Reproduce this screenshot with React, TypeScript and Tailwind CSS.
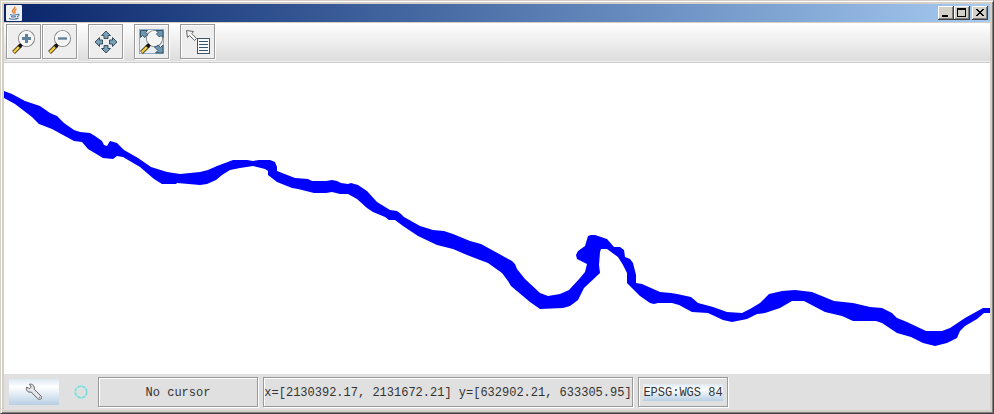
import React, { FunctionComponent, ReactNode } from "react";

const RIVER =
  "M4 91 L12 94 L25 101 L40 106 L50 113 L57 116 L64 123 L74 130 L80 132 L90 133 L95 136 L102 141 L104 145 L107 146 L110 141 L117 143 L124 150 L138 158 L151 167 L167 172 L180 174 L200 172 L208 170 L217 166 L233 160 L247 160 L253 161 L259 160 L270 160 L275 162 L277 167 L277 171 L295 178 L308 179 L312 181 L326 181 L332 180 L337 181 L341 183 L348 184 L351 183 L358 185 L367 191 L377 202 L390 210 L397 211 L401 214 L404 217 L420 226 L433 230 L444 231 L453 234 L470 241 L481 244 L512 261 L515 264 L517 269 L525 279 L540 293 L548 296 L560 294 L569 290 L580 278 L585 272 L587 264 L577 259 L576 255 L578 251 L585 246 L588 236 L591 235 L595 235 L607 239 L614 247 L620 247 L624 250 L625 257 L630 259 L633 263 L636 275 L636 283 L642 284 L660 292 L671 293 L677 294 L691 297 L698 303 L713 307 L727 312 L742 313 L750 309 L760 303 L769 294 L782 291 L795 290 L812 292 L834 301 L853 303 L870 307 L882 308 L892 313 L897 318 L907 322 L926 331 L942 331 L950 328 L965 318 L983 308 L990 308 L990 313 L984 313 L977 319 L965 326 L960 331 L957 338 L947 343 L935 346 L923 343 L911 337 L897 333 L882 323 L876 321 L853 321 L842 316 L825 312 L804 301 L792 301 L780 308 L765 313 L757 314 L747 319 L732 322 L723 320 L708 313 L692 312 L679 305 L672 303 L658 303 L654 304 L650 303 L640 296 L627 283 L627 273 L623 265 L618 257 L607 249 L601 249 L600 252 L599 265 L600 273 L584 288 L578 300 L570 306 L563 308 L540 309 L530 302 L511 286 L508 281 L502 273 L488 263 L480 260 L467 255 L453 249 L437 245 L418 236 L403 226 L395 220 L389 220 L385 217 L373 212 L367 208 L357 199 L348 194 L340 194 L332 192 L326 193 L314 193 L298 189 L292 188 L277 182 L268 175 L268 171 L265 169 L253 166 L240 168 L230 170 L222 175 L216 180 L207 184 L200 185 L177 183 L176 184 L162 184 L154 179 L140 167 L123 157 L117 156 L113 159 L103 158 L88 149 L82 142 L74 141 L52 129 L39 124 L32 117 L15 104 L4 98 Z";

const Lens: FunctionComponent<{ children?: ReactNode }> = ({ children }) => (
  <>
    <circle cx="19.5" cy="13.5" r="8" fill="#f4f4f4" stroke="#8a8a8a" strokeWidth="1.2" />
    <circle cx="19.5" cy="13.5" r="6.9" fill="none" stroke="#fff" strokeWidth="1" />
    <path d="M13.5 20.5 L6.5 27.5" stroke="#4c4420" strokeWidth="4" />
    <path d="M12.5 21.5 L6.8 27.2" stroke="#f8d040" strokeWidth="2.2" />
    <path d="M12 22 L14.5 19.5" stroke="#111" strokeWidth="3.6" />
    {children}
  </>
);

const ToolButton: FunctionComponent<{ label: string; children: ReactNode }> = ({
  label,
  children,
}) => (
  <button
    type="button"
    aria-label={label}
    className="h-[35px] w-[35px] border border-[#999] bg-[#eee] shadow-[1px_1px_0_#fff,inset_1px_1px_0_#fff]"
  >
    <svg viewBox="0 0 33 33" className="block h-[33px] w-[33px]">
      {children}
    </svg>
  </button>
);

const WindowButton: FunctionComponent<{ label: string; children: ReactNode }> = ({
  label,
  children,
}) => (
  <button
    type="button"
    aria-label={label}
    className="h-[14px] w-4 bg-[#d4d0c8] shadow-[inset_-1px_-1px_0_#404040,inset_1px_1px_0_#fff,inset_-2px_-2px_0_#808080]"
  >
    <svg
      viewBox="0 0 16 14"
      className="block h-[14px] w-4"
      shapeRendering="crispEdges"
      fill="#000"
    >
      {children}
    </svg>
  </button>
);

const TitleBar: FunctionComponent = () => (
  <header className="flex h-[18px] items-center bg-linear-to-r from-[#0a246a] to-[#a6caf0] px-[2px]">
    <svg viewBox="0 0 16 16" className="h-4 w-4">
      <rect width="16" height="16" rx="1" fill="#eef0f4" />
      <path
        d="M8.8 1.5 C10 3.5 5.5 4.5 6.5 6.5 L8 8.5 M10.5 4 C8 5 8.5 6 9 7 L8.6 8.5"
        fill="none"
        stroke="#e8832f"
        strokeWidth="1.4"
      />
      <path
        d="M4 9.5 C6 10.4 9 10.2 10.8 9.5 M5 11.5 C7 12.2 8.5 12.2 10 11.5 M3 13.3 C5 14.6 10 14.6 12.5 13 M11 9.5 C14 8.5 13.5 11 11 11.6"
        fill="none"
        stroke="#4b7399"
        strokeWidth="1.1"
      />
    </svg>
    <div className="ml-auto flex">
      <WindowButton label="Minimize">
        <rect x="4" y="9" width="6" height="2" />
      </WindowButton>
      <WindowButton label="Maximize">
        <path d="M3 2h9v9h-9z M4 4v6h7v-6z" fillRule="evenodd" />
      </WindowButton>
    </div>
    <div className="ml-[2px] flex">
      <WindowButton label="Close">
        <path d="M4 3h2v1h1v1h2v-1h1v-1h2v1h-1v1h-1v1h-1v1h1v1h1v1h1v1h-2v-1h-1v-1h-2v1h-1v1h-2v-1h1v-1h1v-1h1v-1h-1v-1h-1v-1h-1z" />
      </WindowButton>
    </div>
  </header>
);

const Toolbar: FunctionComponent = () => (
  <div className="mt-px flex h-10 items-start border-b border-[#ccc] bg-linear-to-b from-white to-[#dcdcdc] px-[2px] pt-px shadow-[inset_0_-1px_0_#eee]">
    <div className="flex gap-px">
      <ToolButton label="Zoom in">
        <Lens>
          <path d="M19.5 9v9 M15 13.5h9" stroke="#5f8199" strokeWidth="3" />
        </Lens>
      </ToolButton>
      <ToolButton label="Zoom out">
        <Lens>
          <path d="M15 13.5h9" stroke="#5f8199" strokeWidth="2.4" />
        </Lens>
      </ToolButton>
    </div>
    <div className="ml-[11px] flex gap-[11px]">
      <ToolButton label="Pan">
        <g fill="#7c9fb5" stroke="#355062" strokeWidth="1">
          {[0, 90, 180, 270].map((angle) => (
            <path
              key={angle}
              transform={`rotate(${angle} 17 17)`}
              d="M17 6 L21.5 10.5 H19 V13.5 H15 V10.5 H12.5 Z"
            />
          ))}
        </g>
      </ToolButton>
      <ToolButton label="Full extent">
        <rect x="4.5" y="4.5" width="24" height="24" fill="#e8edf0" stroke="#8eacc6" />
        <Lens />
        <g fill="#6f97b2" stroke="#35566c" strokeWidth="1">
          <path d="M5.5 5.5h7l-2 2 2.5 2q-2 1-3 3l-2.500-2-2 2z" />
          <path d="M28 5.500h-7l2 2-1.500 1.500 3 3 1.500-1.500 2 2z" />
          <path d="M28 28h-7.500l2.500-2.500-3.500-3.500q2.500-.5 3.500-2l2.500 2.500 2.500-2.500z" />
        </g>
      </ToolButton>
      <ToolButton label="Feature info">
        <path
          d="M5.500 5.500 L12.500 6.500 L10.800 8.500 L15.500 13.500 L13.500 15.500 L8.500 10.500 L6.500 12.500 Z"
          fill="#f5f5f5"
          stroke="#666"
        />
        <rect x="16.5" y="13.5" width="12" height="15" fill="#f8f8f8" stroke="#35566c" />
        <path d="M18 16.5h9 M18 19.5h9 M18 22.5h9 M18 25.5h9" stroke="#35566c" />
      </ToolButton>
    </div>
  </div>
);

const StatusField: FunctionComponent<{ children: ReactNode; className: string }> = ({
  children,
  className,
}) => (
  <div
    className={`flex h-[30px] items-center justify-center border border-[#999] pt-px whitespace-nowrap shadow-[1px_1px_0_#fff,inset_1px_1px_0_#fff] ${className}`}
  >
    {children}
  </div>
);

const StatusBar: FunctionComponent = () => (
  <footer className="flex h-9 items-center bg-[#e0e0e0] pl-[5px] font-['Liberation_Mono',monospace] text-xs text-[#333]">
    <button
      type="button"
      aria-label="Settings"
      className="flex h-[26px] w-[50px] items-center justify-center bg-linear-to-b from-[#dde8f3] via-white via-30% to-[#b8cfe5]"
    >
      <svg viewBox="0 0 18 18" className="h-[18px] w-[18px]">
        <path
          d="M4.500 1.200 L6.200 4 L4.500 5.600 L1.500 4.200 C.6 7.500 3 9.800 6.200 9 L13 15.900 C15 17.800 17.800 15.200 16 13.100 L9.200 6.200 C9.900 3 7.500 .6 4.500 1.200 Z"
          fill="#e6e6ea"
          stroke="#606066"
        />
        <circle cx="14.500" cy="14.500" r=".7" fill="#777" />
      </svg>
    </button>
    <svg viewBox="0 0 16 16" className="ml-[14px] h-4 w-4">
      <circle cx="8" cy="8" r="6" fill="none" stroke="#b8ebe9" strokeWidth="2.2" />
      <circle
        cx="8"
        cy="8"
        r="5.7"
        fill="none"
        stroke="#7cd8d6"
        strokeWidth="1.4"
        strokeDasharray="3.6 .9"
      />
    </svg>
    <div className="ml-[9px] flex gap-[5px]">
      <StatusField className="w-40">No cursor</StatusField>
      <StatusField className="w-[370px]">
        x=[2130392.17, 2131672.21] y=[632902.21, 633305.95]
      </StatusField>
      <StatusField className="w-[90px]">
        <button
          type="button"
          className="h-[17px] bg-linear-to-b from-[#dde8f3] via-white via-30% to-[#b8cfe5]"
        >
          EPSG:WGS 84
        </button>
      </StatusField>
    </div>
  </footer>
);

const App: FunctionComponent = () => (
  <div className="flex h-screen flex-col border border-t-[#d4d0c8] border-r-[#404040] border-b-[#404040] border-l-[#d4d0c8] bg-[#d4d0c8] p-[3px] shadow-[inset_1px_1px_0_#fff,inset_-1px_-1px_0_#808080]">
    <TitleBar />
    <Toolbar />
    <main className="min-h-0 flex-1 bg-white">
      <svg
        viewBox="4 63 986 311"
        preserveAspectRatio="none"
        role="img"
        aria-label="River map"
        className="block h-full w-full"
      >
        <path d={RIVER} fill="#00f" />
      </svg>
    </main>
    <StatusBar />
  </div>
);

export default App;
